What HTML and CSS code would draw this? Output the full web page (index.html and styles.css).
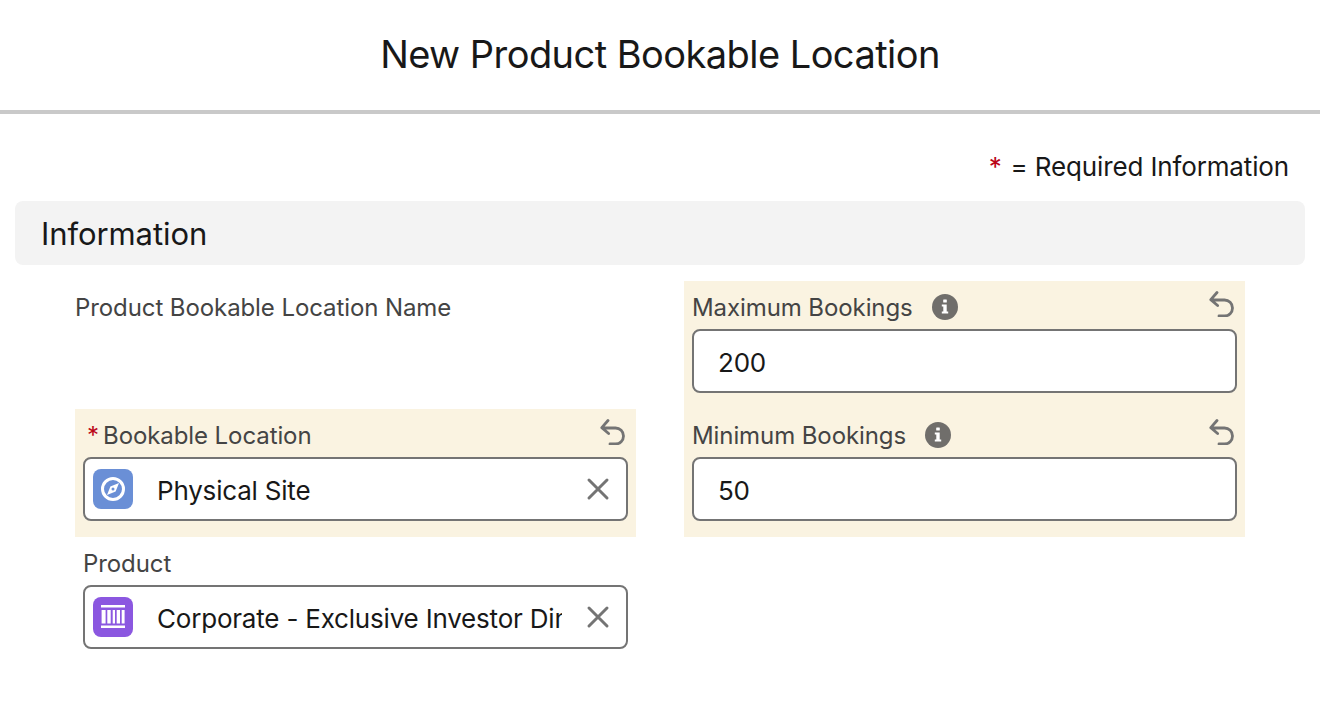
FILE: index.html
```html
<!DOCTYPE html>
<html lang="en">
<head>
<meta charset="utf-8">
<title>New Product Bookable Location</title>
<link rel="stylesheet" href="styles.css">
</head>
<body>
<header class="modal-header"><h1 class="modal-title">New Product Bookable Location</h1></header>
<main class="modal-body">
  <p class="legend"><span class="req legend-star">*</span><span>= Required Information</span></p>
  <h2 class="section-title">Information</h2>
  <div class="form-grid">
    <div class="field">
      <div class="label-row"><span class="label">Product Bookable Location Name</span></div>
    </div>
    <div class="field edited">
      <div class="label-row">
        <span class="label">Maximum Bookings</span>
        <svg class="info" viewBox="0 0 26 26"><circle cx="13" cy="13" r="13" fill="#706e6b"/><rect x="11.2" y="5.5" width="3.6" height="3" rx=".5" fill="#fff"/><path d="M9.8 10.5h4.9v7h1.5v1.9H9.8v-1.9h1.5v-5.1H9.8z" fill="#fff"/></svg>
        <svg class="undo" viewBox="0 0 26 26"><path d="M8 1.5 1.8 8.6 8.6 14.5M2 9H15.5a8 8 0 0 1 0 16H10" fill="none" stroke="#747474" stroke-width="2.8" stroke-linecap="round" stroke-linejoin="round"/></svg>
      </div>
      <div class="input"><span class="value">200</span></div>
    </div>
    <div class="field edited">
      <div class="label-row">
        <span class="req label-star">*</span><span class="label">Bookable Location</span>
        <svg class="undo" viewBox="0 0 26 26"><path d="M8 1.5 1.8 8.6 8.6 14.5M2 9H15.5a8 8 0 0 1 0 16H10" fill="none" stroke="#747474" stroke-width="2.8" stroke-linecap="round" stroke-linejoin="round"/></svg>
      </div>
      <div class="input lookup">
        <span class="obj obj-blue">
          <svg viewBox="0 0 40 40"><circle cx="20" cy="20" r="10.5" fill="none" stroke="#fff" stroke-width="3"/><path d="M26 14 22.6 22.6 14 26l3.4-8.6z" fill="#fff"/><circle cx="20" cy="20" r="1.5" fill="#6a8fd6"/></svg>
        </span>
        <span class="value clip">Physical Site</span>
        <svg class="clear" viewBox="0 0 24 24"><path d="M3 3l18 18M21 3 3 21" stroke="#747474" stroke-width="3" stroke-linecap="round"/></svg>
      </div>
    </div>
    <div class="field edited">
      <div class="label-row">
        <span class="label">Minimum Bookings</span>
        <svg class="info" viewBox="0 0 26 26"><circle cx="13" cy="13" r="13" fill="#706e6b"/><rect x="11.2" y="5.5" width="3.6" height="3" rx=".5" fill="#fff"/><path d="M9.8 10.5h4.9v7h1.5v1.9H9.8v-1.9h1.5v-5.1H9.8z" fill="#fff"/></svg>
        <svg class="undo" viewBox="0 0 26 26"><path d="M8 1.5 1.8 8.6 8.6 14.5M2 9H15.5a8 8 0 0 1 0 16H10" fill="none" stroke="#747474" stroke-width="2.8" stroke-linecap="round" stroke-linejoin="round"/></svg>
      </div>
      <div class="input"><span class="value">50</span></div>
    </div>
    <div class="field">
      <div class="label-row"><span class="label">Product</span></div>
      <div class="input lookup">
        <span class="obj obj-purple">
          <svg viewBox="0 0 40 40"><path d="M8 8h24v2.4H8zM8 28.6h24V31H8z" fill="#fff"/><path d="M8.6 13h4v13.4h-4zM14.3 13h3.4v13.4h-3.4zM19.7 13H22v13.4h-2.3zM23.7 13H27v13.4h-3.3zM28.7 13h2.9v13.4h-2.9z" fill="#fff"/></svg>
        </span>
        <span class="value clip">Corporate - Exclusive Investor Dinner Series</span>
        <svg class="clear" viewBox="0 0 24 24"><path d="M3 3l18 18M21 3 3 21" stroke="#747474" stroke-width="3" stroke-linecap="round"/></svg>
      </div>
    </div>
  </div>
</main>
</body>
</html>
```
FILE: styles.css
```css
* { box-sizing: border-box; }
html, body { margin: 0; padding: 0; }
body {
  width: 1320px;
  height: 726px;
  overflow: hidden;
  background: #fff;
  color: #181818;
  font-family: Inter, "Liberation Sans", sans-serif;
}
.modal-header {
  height: 114px;
  border-bottom: 4px solid #c9c9c9;
  padding-bottom: 2px;
  display: flex;
  align-items: center;
  justify-content: center;
}
.modal-title {
  margin: 0;
  font-size: 38px;
  letter-spacing: -0.55px;
  line-height: 44px;
  font-weight: 400;
}
.modal-body {
  padding: 0 15px;
}
.legend {
  margin: 0;
  height: 87px;
  padding: 36px 16px 0 0;
  display: flex;
  justify-content: flex-end;
  align-items: flex-start;
  font-size: 26px;
  letter-spacing: -0.14px;
  line-height: 34px;
}
.req { color: #ba0517; }
.legend-star { margin-right: 9px; font-size: 26px; }
.section-title {
  margin: 0;
  height: 64px;
  padding-left: 26px;
  background: #f3f3f3;
  border-radius: 8px;
  font-size: 31px;
  letter-spacing: -0.08px;
  font-weight: 400;
  line-height: 65px;
}
.form-grid {
  margin: 16px 60px 0;
  display: grid;
  grid-template-columns: 561px 561px;
  column-gap: 48px;
  grid-auto-rows: 128px;
}
.field { padding: 0 8px; }
.field.edited { background: #faf3e1; }
.label-row {
  height: 48px;
  display: flex;
  align-items: center;
  padding-top: 5px;
  position: relative;
}
.label {
  font-size: 24px;
  letter-spacing: -0.09px;
  line-height: 32px;
  color: #444;
}
.label-star { font-size: 24px; margin: 0 4px 0 4px; line-height: 32px; }
.field:first-child .label-row { margin-left: -8px; }
.info { width: 26px; height: 26px; margin: 0 0 2px 19px; }
.undo { width: 26px; height: 26px; position: absolute; right: 2px; top: 10px; }
.input {
  height: 64px;
  background: #fff;
  border: 2px solid #747474;
  border-radius: 8px;
  display: flex;
  align-items: center;
  padding: 2px 0 0 24px;
}
.lookup { padding: 0 16px 0 8px; }
.value { font-size: 26px; letter-spacing: -0.2px; color: #181818; white-space: nowrap; }
.clip { flex: 1; min-width: 0; overflow: hidden; margin: 2px 24px 0 24px; }
.obj { flex: none; width: 40px; height: 40px; border-radius: 8px; display: block; }
.obj svg { display: block; width: 40px; height: 40px; }
.obj-blue { background: #6a8fd6; }
.obj-purple { background: #8b57e0; }
.clear { flex: none; width: 24px; height: 24px; }
```
